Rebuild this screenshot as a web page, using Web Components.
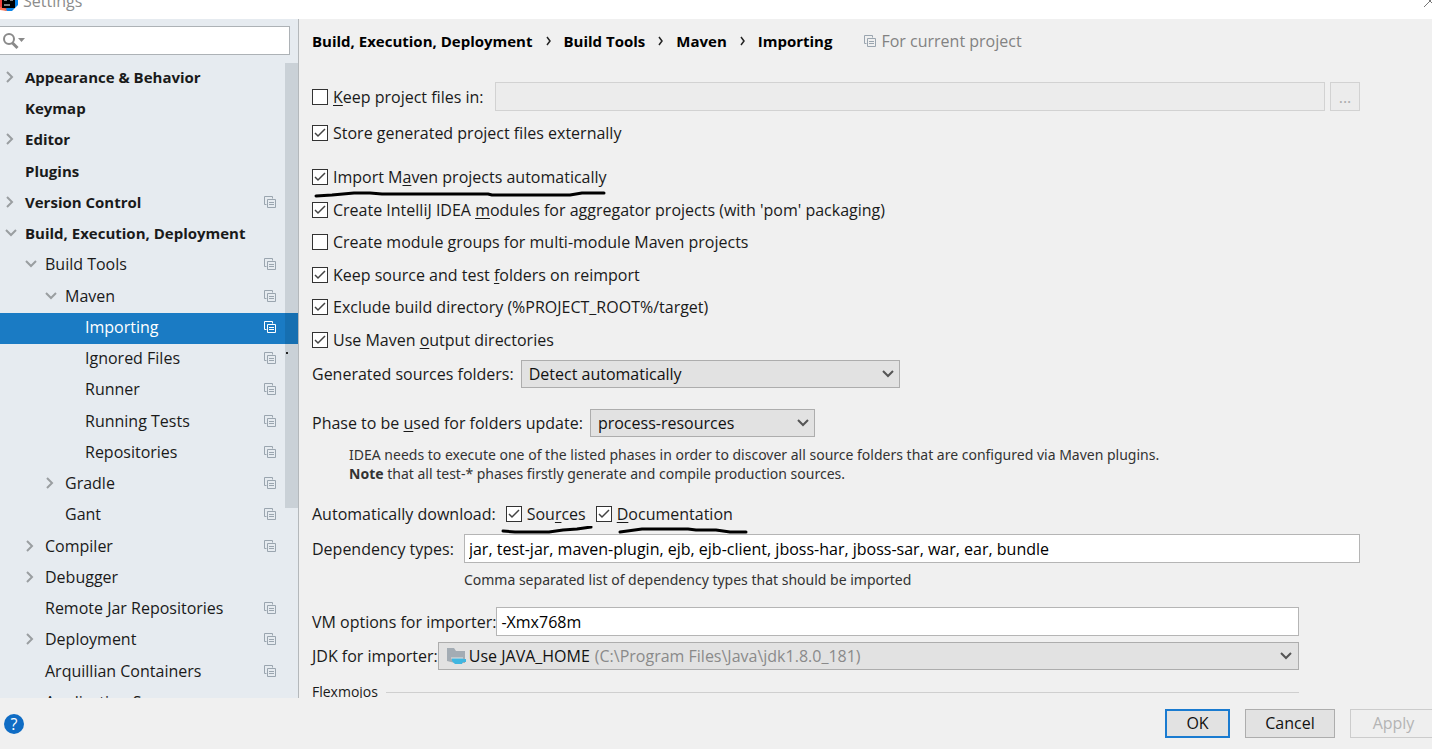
<!DOCTYPE html>
<html lang="en">
<head>
<meta charset="utf-8">
<title>Settings</title>
<style>
html, body { margin: 0; height: 100%; }
body {
  font: 16px/20px "Open Sans", "Noto Sans", sans-serif;
  color: #1a1a1a;
  background: #f0f0f0;
  overflow: hidden;
}
u { text-decoration-thickness: 1px; text-underline-offset: 2px; }
.gray { color: #8a8a8a; }
</style>
</head>
<body>
<settings-window>
  <title-bar slot="title">Settings</title-bar>

  <settings-tree slot="side">
    <tree-item level="0" arrow="right" bold>Appearance &amp; Behavior</tree-item>
    <tree-item level="0" bold>Keymap</tree-item>
    <tree-item level="0" arrow="right" bold>Editor</tree-item>
    <tree-item level="0" bold>Plugins</tree-item>
    <tree-item level="0" arrow="right" bold project>Version Control</tree-item>
    <tree-item level="0" arrow="down" bold>Build, Execution, Deployment</tree-item>
    <tree-item level="1" arrow="down" project>Build Tools</tree-item>
    <tree-item level="2" arrow="down" project>Maven</tree-item>
    <tree-item level="3" project selected>Importing</tree-item>
    <tree-item level="3" project>Ignored Files</tree-item>
    <tree-item level="3" project>Runner</tree-item>
    <tree-item level="3" project>Running Tests</tree-item>
    <tree-item level="3" project>Repositories</tree-item>
    <tree-item level="2" arrow="right" project>Gradle</tree-item>
    <tree-item level="2" project>Gant</tree-item>
    <tree-item level="1" arrow="right" project>Compiler</tree-item>
    <tree-item level="1" arrow="right">Debugger</tree-item>
    <tree-item level="1" project>Remote Jar Repositories</tree-item>
    <tree-item level="1" arrow="right" project>Deployment</tree-item>
    <tree-item level="1" project>Arquillian Containers</tree-item>
    <tree-item level="1">Application Servers</tree-item>
  </settings-tree>

  <crumb-trail path="Build, Execution, Deployment|Build Tools|Maven|Importing">For current project</crumb-trail>
  <keep-files><u>K</u>eep project files in:</keep-files>
  <check-group>
    <check-box checked>Store generated project files externally</check-box>
  </check-group>
  <check-group>
    <check-box checked>Import M<u>a</u>ven projects automatically<pen-line slot="mark" width="294" d="M4 5 L20 4 L42 2 L58 2 L70 3 L176 3 L180 4 L258 4 L270 2 L292 2"></pen-line></check-box>
    <check-box checked>Create IntelliJ IDEA <u>m</u>odules for aggregator projects (with 'pom' packaging)</check-box>
    <check-box>Create module <u>g</u>roups for multi-module Maven projects</check-box>
    <check-box checked>Keep source and test <u>f</u>olders on reimport</check-box>
    <check-box checked>Exclude build directory (%PROJECT_ROOT%/target)</check-box>
    <check-box checked>Use Maven <u>o</u>utput directories</check-box>
  </check-group>
  <select-row class="sources" value="Detect automatically">Generated sources folders:</select-row>
  <select-row class="phase" value="process-resources">Phase to be <u>u</u>sed for folders update:
    <span slot="note">IDEA needs to execute one of the listed phases in order to discover all source folders that are configured via Maven plugins.<br><b>Note</b> that all test-* phases firstly generate and compile production sources.</span>
  </select-row>
  <download-row>
    Automatically download:
    <check-box slot="box" checked>Sou<u>r</u>ces<pen-line slot="mark" outset width="92" d="M2 5 L14 6 L48 6 L62 4 L76 3 L90 1"></pen-line></check-box>
    <check-box slot="box" checked><u>D</u>ocumentation<pen-line slot="mark" inset width="132" d="M2 6 L24 3 L70 3 L78 4 L98 4 L112 6 L128 6"></pen-line></check-box>
  </download-row>
  <text-row class="types" value="jar, test-jar, maven-plugin, ejb, ejb-client, jboss-har, jboss-sar, war, ear, bundle">Dependency types:<span slot="note">Comma separated list of dependency types that should be imported</span></text-row>
  <text-row class="vm" value="-Xmx768m">VM options for importer:</text-row>
  <jdk-row>JDK for importer:<span slot="path" class="gray">(C:\Program Files\Java\jdk1.8.0_181)</span></jdk-row>
  <titled-rule>Flexmojos</titled-rule>

  <dialog-footer slot="footer"></dialog-footer>
</settings-window>

<script>
const define = (name, html, setup) => {
  const tpl = document.createElement('template');
  tpl.innerHTML = '<style>*{box-sizing:border-box}svg{display:block;flex:none}:host([hidden]){display:none}</style>' + html;
  customElements.define(name, class extends HTMLElement {
    constructor() {
      super();
      this.attachShadow({ mode: 'open' }).append(tpl.content.cloneNode(true));
    }
    connectedCallback() {
      if (setup && !this.ready) { this.ready = true; setup(this, this.shadowRoot); }
    }
  });
};

define('settings-window', `
<style>
:host { display: grid; grid-template-rows: auto minmax(0, 1fr) auto; height: 100vh; }
.middle { display: flex; min-height: 0; }
aside { flex: none; width: 299px; overflow: hidden; background: #e6ebf0; border-right: 1px solid #b4b8bb; }
main { flex: 1; min-width: 0; overflow: hidden; padding: 12px 72px 0 13px; }
</style>
<slot name="title"></slot>
<div class="middle"><aside><slot name="side"></slot></aside><main><slot></slot></main></div>
<slot name="footer"></slot>`);

define('title-bar', `
<style>
:host { display: flex; align-items: flex-end; gap: 5px; height: 19px; padding-bottom: 8px; box-sizing: border-box; background: #fff; color: #8c8c8c; overflow: hidden; }
.name { flex: 1; }
button { border: 0; background: none; padding: 0; }
</style>
<svg width="18" height="20" viewBox="0 0 18 20"><path d="M0 5L4 2 9 16 7 20 0 18z" fill="#f5443f"/><path d="M5 20l3-6 10-12v12l-6 6z" fill="#0a84e8"/><path d="M0 16l6 2 1 2-7-1z" fill="#fe7a5c"/><path d="M2 3h13v14H2z" fill="#000"/><path d="M4 14h6M4 9h3M10 9h3" stroke="#fff"/></svg>
<span class="name"><slot></slot></span>
<button aria-label="Close"><svg width="10" height="14" viewBox="0 0 10 14"><path d="M2 10L12 0M4 0l8 8" stroke="#777" fill="none"/></svg></button>`);

define('project-icon', `
<style>:host { display: block; color: #9aa5af; }</style>
<svg width="12" height="12" viewBox="0 0 12 12" fill="none" stroke="currentColor"><path d="M2.5 8.500H.5v-8h8v2"/><path d="M3.500 3.500h8v8h-8z"/><path d="M5 6.500h5M5 8.500h5"/></svg>`);

define('settings-tree', `
<style>
:host { display: block; padding-top: 7px; position: relative; }
.search { display: flex; align-items: center; gap: 2px; width: 290px; height: 29px; margin-bottom: 8px; padding-left: 2px; background: #fff; border: 1px solid #adb2b6; border-left: 0; }
input { flex: 1; min-width: 0; border: 0; outline: 0; background: none; font: inherit; }
::slotted(tree-item) { height: 31px; }
::slotted(tree-item:nth-of-type(4n)) { height: 32px; }
.thumb { position: absolute; top: 44px; right: 0; width: 13px; height: 445px; background: rgba(0, 25, 45, .12); }
.speck { position: absolute; top: 333px; right: 10px; width: 2px; height: 2px; background: #222; }
</style>
<div class="search"><svg width="24" height="20" viewBox="0 0 24 20"><circle cx="7" cy="8" r="5" fill="none" stroke="#8a8a8a" stroke-width="2"/><path d="M10.500 12l5 5" stroke="#8a8a8a" stroke-width="3"/><path d="M16 7h7l-3.500 4z" fill="#8a8a8a"/></svg><input type="text" aria-label="Search settings"></div>
<slot></slot>
<div class="thumb"></div><div class="speck"></div>`);

define('tree-item', `
<style>
:host { display: flex; align-items: center; padding: 0 22px 3px 0; box-sizing: border-box; }
:host([bold]) { font-size: 15px; font-weight: 700; }
:host([selected]) { background: #1a7bc4; color: #fff; }
:host([selected]) project-icon { color: #fff; }
:host([level="1"]) { padding-left: 20px; }
:host([level="2"]) { padding-left: 40px; }
:host([level="3"]) { padding-left: 60px; }
.arrow { width: 25px; padding-left: 3px; }
.text { flex: 1; white-space: nowrap; }
project-icon[hidden] { display: none; }
</style>
<span class="arrow"><svg width="14" height="12" viewBox="0 0 14 12" fill="none" stroke="#9a9ea1" stroke-width="2"><path/></svg></span>
<span class="text"><slot></slot></span>
<project-icon></project-icon>`, (el, root) => {
  const shape = { right: 'M4 1l5 5-5 5', down: 'M3 3l5 5 5-5' }[el.getAttribute('arrow')];
  if (shape) root.querySelector('path').setAttribute('d', shape);
  root.querySelector('project-icon').hidden = !el.hasAttribute('project');
});

define('crumb-trail', `
<style>
:host { display: flex; align-items: center; margin-bottom: 31px; }
nav { display: flex; align-items: center; font-size: 15px; font-weight: 700; color: #000; }
a { color: inherit; text-decoration: none; }
nav svg { margin: 0 12px; }
.scope { display: flex; align-items: center; gap: 5px; margin-left: 32px; color: #828282; }
</style>
<nav></nav><span class="scope"><project-icon></project-icon><slot></slot></span>`, (el, root) => {
  root.querySelector('nav').innerHTML = el.getAttribute('path').split('|').map(t => `<a href="#">${t}</a>`)
    .join('<svg width="7" height="10" viewBox="0 0 7 10"><path d="M2 1l3 4-3 4" fill="none" stroke="#222" stroke-width="1.500"/></svg>');
});

define('check-box', `
<style>
:host { display: flex; align-items: center; position: relative; }
label { display: flex; align-items: center; gap: 5px; white-space: nowrap; }
.box { display: grid; }
.box > * { grid-area: 1 / 1; }
input { appearance: none; width: 16px; height: 16px; margin: 0; border: 1px solid #333; background: #fff; }
svg { pointer-events: none; visibility: hidden; }
input:checked + svg { visibility: visible; }
</style>
<label><span class="box"><input type="checkbox"><svg width="16" height="16" viewBox="0 0 16 16"><path d="M3 8l3 3 7-7" fill="none" stroke="#444" stroke-width="1.500"/></svg></span><span><slot></slot></span></label><slot name="mark"></slot>`,
(el, root) => { root.querySelector('input').checked = el.hasAttribute('checked'); });

define('pen-line', `
<style>
:host { position: absolute; top: 100%; left: 0; margin-top: -2px; pointer-events: none; }
:host([inset]) { left: 22px; }
:host([outset]) { left: -5px; }
path { fill: none; stroke: #000; stroke-width: 3; stroke-linecap: round; stroke-linejoin: round; }
</style>
<svg height="10"><path/></svg>`, (el, root) => {
  root.querySelector('svg').setAttribute('width', el.getAttribute('width'));
  root.querySelector('path').setAttribute('d', el.getAttribute('d'));
});

define('check-group', `
<style>
:host { display: block; margin-bottom: 12px; }
::slotted(check-box) { height: 32px; }
::slotted(check-box:nth-of-type(even)) { height: 33px; }
</style><slot></slot>`);

const fieldCss = `
input[type=text], button { font: inherit; color: #000; height: 29px; border: 1px solid #b5b5b5; background: #fff; padding: 0 4px; margin: 0; border-radius: 0; min-width: 0; outline: 0; }
label { white-space: nowrap; }
`;

define('keep-files', `
<style>${fieldCss}
:host { display: flex; align-items: center; gap: 5px; margin-bottom: 6px; }
check-box { width: 178px; }
input[type=text] { flex: 1; }
input[type=text]:disabled, button:disabled { background: #ececec; border-color: #d2d2d2; color: #aaa; }
button { width: 30px; }
</style>
<check-box><slot></slot></check-box><input type="text" disabled aria-label="Project files folder"><button disabled aria-label="Browse">...</button>`);

const chevron = '<svg class="chev" width="14" height="10" viewBox="0 0 14 10"><path d="M2 2l5 5 5-5" fill="none" stroke="#555" stroke-width="2"/></svg>';

define('select-row', `
<style>
:host { display: block; }
.row { display: flex; align-items: center; gap: 7px; }
label { white-space: nowrap; }
.drop { display: grid; align-items: center; width: 379px; }
.drop > * { grid-area: 1 / 1; }
:host(.sources) { margin-bottom: 21px; margin-top: -8px; }
:host(.phase) .drop { width: 225px; }
select { appearance: none; height: 28px; width: 100%; margin: 0; padding: 0 7px; font: inherit; color: #111; background: #e2e2e2; border: 1px solid #adadad; border-radius: 0; }
.chev { justify-self: end; margin-right: 5px; pointer-events: none; }
.note { margin: 8px 0 0 37px; font-family: "Noto Sans", sans-serif; font-size: 14px; line-height: 19px; color: #333; }
.note[hidden] { display: none; }
</style>
<div class="row"><label for="s"><slot></slot></label><span class="drop"><select id="s"><option></option></select>${chevron}</span></div>
<div class="note"><slot name="note"></slot></div>`, (el, root) => {
  root.querySelector('option').textContent = el.getAttribute('value');
  root.querySelector('.note').hidden = !el.querySelector('[slot=note]');
});

define('download-row', `
<style>
:host { display: flex; align-items: center; gap: 10px; height: 28px; margin: 17px 0 6px; white-space: nowrap; }
::slotted(check-box) { height: 28px; }
</style>
<span><slot></slot></span><slot name="box"></slot>`);

define('text-row', `
<style>${fieldCss}
:host { display: grid; grid-template-columns: auto 1fr; align-items: center; column-gap: 10px; }
:host(.vm) { column-gap: 0; margin: 17px 61px 6px 0; }
.note { grid-column: 2; font-family: "Noto Sans", sans-serif; font-size: 14px; margin-top: 7px; color: #333; }
.note[hidden] { display: none; }
</style>
<label for="t"><slot></slot></label><input type="text" id="t"><div class="note"><slot name="note"></slot></div>`, (el, root) => {
  root.querySelector('input').value = el.getAttribute('value');
  root.querySelector('.note').hidden = !el.querySelector('[slot=note]');
});

define('jdk-row', `
<style>
:host { display: flex; align-items: center; margin-right: 61px; white-space: nowrap; }
.drop { flex: 1; display: flex; align-items: center; height: 28px; padding: 0 5px 0 8px; background: #e2e2e2; border: 1px solid #adadad; }
select { appearance: none; border: 0; padding: 0; margin: 0 4px 0 3px; font: inherit; color: #111; background: none; }
.path { flex: 1; }
</style>
<label for="j"><slot></slot></label><div class="drop"><svg width="19" height="18" viewBox="0 0 19 18"><path d="M0 1h7l2 3h9v12H8L0 14z" fill="#a3acb4"/><path d="M5 11h11v1h3v3h-3l-1 2H8l-3-3z" fill="#40b6e0"/><path d="M4 11h12" stroke="#e2e2e2"/></svg><select id="j"><option>Use JAVA_HOME</option></select><span class="path"><slot name="path"></slot></span>${chevron}</div>`);

define('titled-rule', `
<style>
:host { display: flex; align-items: center; gap: 8px; margin: 12px 61px 0 0; font-size: 14px; }
i { flex: 1; height: 1px; background: #cfcfcf; }
</style><slot></slot><i></i>`);

define('dialog-footer', `
<style>
:host { display: flex; align-items: center; gap: 15px; height: 51px; padding-left: 4px; background: #f0f0f0; overflow: hidden; }
.help { width: 20px; height: 20px; margin-right: auto; border: 0; border-radius: 50%; padding: 0; background: #0f6cc4; color: #fff; font: inherit; line-height: 20px; }
.btn { flex: none; width: 90px; height: 29px; padding: 0 0 1px; font: inherit; color: #111; background: #e2e2e2; border: 1px solid #adadad; border-radius: 0; }
.ok { width: 65px; border: 2px solid #1a7bd0; }
.apply { width: 82px; padding-left: 4px; border-right: 0; background: #efefef; border-color: #ccc; color: #b4b4b4; }
</style>
<button class="help" aria-label="Help">?</button><button class="btn ok">OK</button><button class="btn">Cancel</button><button class="btn apply" disabled>Apply</button>`);
</script>
</body>
</html>
